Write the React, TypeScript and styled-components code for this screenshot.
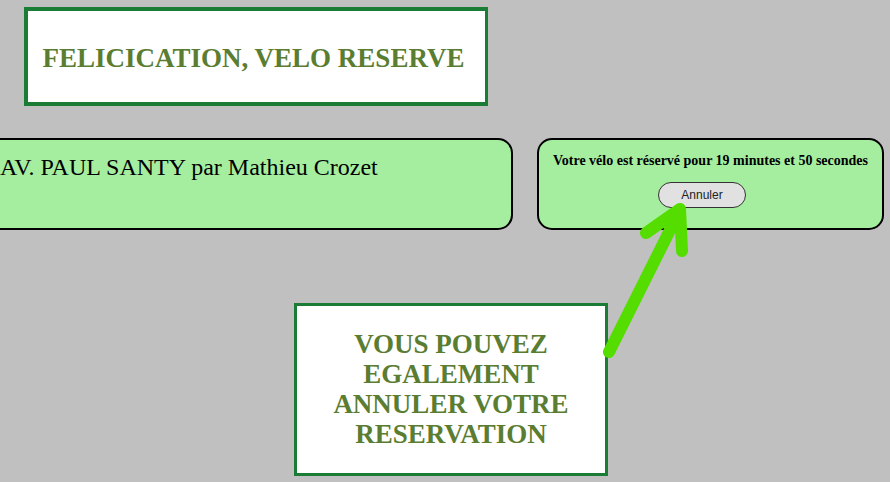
import React, { ReactElement } from 'react';
import styled, { createGlobalStyle } from 'styled-components';

const GlobalStyle = createGlobalStyle`
  html, body {
    margin: 0;
    padding: 0;
    background: #c0c0c0;
  }
  body {
    font-family: 'Liberation Serif', 'Times New Roman', serif;
    width: 890px;
    height: 482px;
    overflow: hidden;
  }
`;

function Arrow(): ReactElement {
  return (
    <ArrowLayer width="890" height="482" viewBox="0 0 890 482">
      <g
        fill="none"
        stroke="#55dd00"
        strokeWidth="12"
        strokeLinecap="round"
        strokeLinejoin="round"
      >
        <path d="M609 352 L679 212" />
        <path d="M646 233 L680 209 L682 251" />
      </g>
    </ArrowLayer>
  );
}

function App(): ReactElement {
  return (
    <Page>
      <GlobalStyle />
      <Header>
        <NoticeBox>
          <NoticeTitle>FELICICATION, VELO RESERVE</NoticeTitle>
        </NoticeBox>
      </Header>
      <CardRow>
        <StationCard>
          <StationName>AV. PAUL SANTY par Mathieu Crozet</StationName>
        </StationCard>
        <TimerCard>
          <TimerText>Votre vélo est réservé pour 19 minutes et 50 secondes</TimerText>
          <CancelButton>Annuler</CancelButton>
        </TimerCard>
      </CardRow>
      <HintBox>
        <HintText>
          VOUS POUVEZ
          <br />
          EGALEMENT
          <br />
          ANNULER VOTRE
          <br />
          RESERVATION
        </HintText>
      </HintBox>
      <Arrow />
    </Page>
  );
}

export default App;

const Page = styled.div`
  position: relative;
  width: 890px;
  height: 482px;
  display: flex;
  flex-direction: column;
`;

const Header = styled.div`
  display: flex;
  padding: 7px 0 0 24px;
`;

const NoticeBox = styled.div`
  box-sizing: border-box;
  width: 464px;
  height: 99px;
  background: #ffffff;
  border: 4px solid #1b7c35;
  border-right-width: 3px;
  display: flex;
  align-items: center;
  justify-content: center;
`;

const NoticeTitle = styled.h1`
  margin: 4px 6px 0 0;
  font-size: 27px;
  font-weight: bold;
  color: #5a7d31;
`;

const CardRow = styled.div`
  display: flex;
  gap: 24px;
  margin-top: 32px;
  margin-left: -24px;
`;

const Card = styled.div`
  box-sizing: border-box;
  height: 92px;
  background: #a6ee9f;
  border: 2px solid #000000;
  border-radius: 15px;
`;

const StationCard = styled(Card)`
  width: 537px;
  padding: 14px 0 0 22px;
`;

const StationName = styled.div`
  font-size: 24px;
  color: #000000;
`;

const TimerCard = styled(Card)`
  width: 347px;
  display: flex;
  flex-direction: column;
  align-items: center;
  padding-top: 13px;
`;

const TimerText = styled.div`
  font-size: 14px;
  font-weight: bold;
  color: #000000;
`;

const CancelButton = styled.button`
  box-sizing: border-box;
  margin: 13px 17px 0 0;
  width: 88px;
  height: 26px;
  border: 1px solid #333333;
  border-radius: 13px;
  background: #e1e1e1;
  color: #222222;
  font-family: 'Liberation Sans', Arial, sans-serif;
  font-size: 12px;
  padding: 0;
`;

const HintBox = styled.div`
  box-sizing: border-box;
  margin: 73px 0 0 294px;
  width: 314px;
  height: 173px;
  background: #ffffff;
  border: 3px solid #1b7c35;
  display: flex;
  justify-content: center;
  padding-top: 23px;
`;

const HintText = styled.div`
  font-size: 27px;
  font-weight: bold;
  line-height: 30px;
  text-align: center;
  color: #5a7d31;
`;

const ArrowLayer = styled.svg`
  position: absolute;
  top: 0;
  left: 0;
  pointer-events: none;
`;
